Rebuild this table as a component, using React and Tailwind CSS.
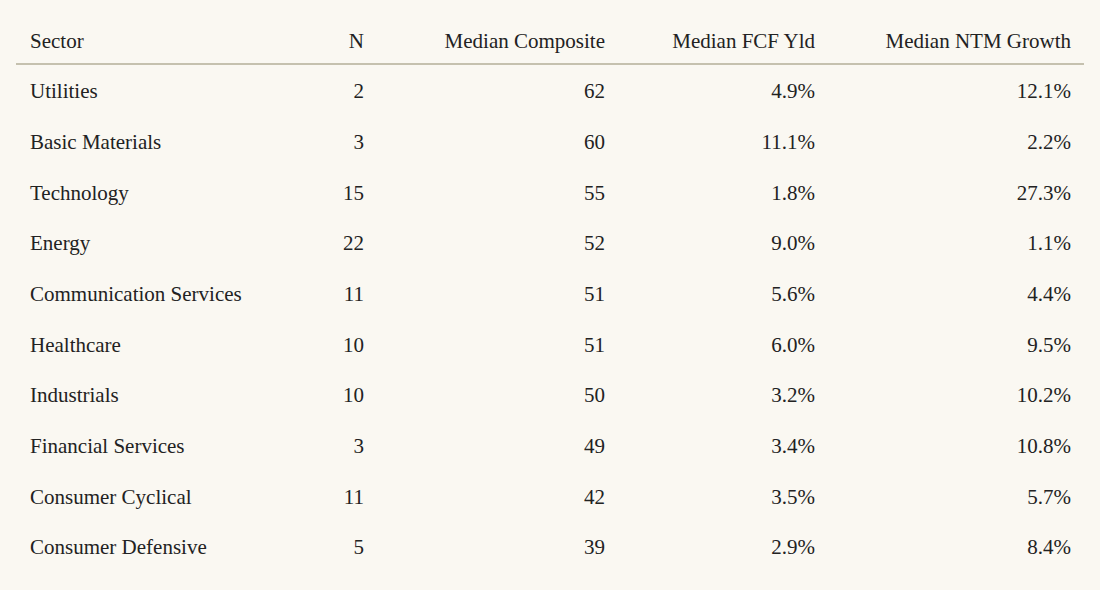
import React from "react";

const rows = [
  ["Utilities", "2", "62", "4.9%", "12.1%"],
  ["Basic Materials", "3", "60", "11.1%", "2.2%"],
  ["Technology", "15", "55", "1.8%", "27.3%"],
  ["Energy", "22", "52", "9.0%", "1.1%"],
  ["Communication Services", "11", "51", "5.6%", "4.4%"],
  ["Healthcare", "10", "51", "6.0%", "9.5%"],
  ["Industrials", "10", "50", "3.2%", "10.2%"],
  ["Financial Services", "3", "49", "3.4%", "10.8%"],
  ["Consumer Cyclical", "11", "42", "3.5%", "5.7%"],
  ["Consumer Defensive", "5", "39", "2.9%", "8.4%"],
];

const headers = ["Sector", "N", "Median Composite", "Median FCF Yld", "Median NTM Growth"];

const gridCols = "grid grid-cols-[300px_61px_241px_210px_256px]";

const App = () => {
  return (
    <div
      className="w-[1100px] h-[590px] bg-[#faf8f2] text-[#222222] px-4 pt-4 overflow-hidden"
      style={{ fontFamily: '"Liberation Serif", serif' }}
    >
      {/* Header */}
      <div className={`${gridCols} h-[49px] items-center border-b-2 border-[#c5c1af] text-[21px] leading-[28px]`}>
        {headers.map((h, i) => (
          <div key={h} className={`px-[14px] pt-[2px] ${i === 0 ? "text-left" : "text-right pr-[13px]"}`}>
            {h}
          </div>
        ))}
      </div>

      {/* Body */}
      {rows.map((row) => (
        <div key={row[0]} className={`${gridCols} h-[50.67px] items-center text-[21px] leading-[28px] pt-[2px]`}>
          {row.map((cell, i) => (
            <div key={i} className={`px-[14px] ${i === 0 ? "text-left" : "text-right pr-[13px]"}`}>
              {cell}
            </div>
          ))}
        </div>
      ))}
    </div>
  );
};

export default App;
